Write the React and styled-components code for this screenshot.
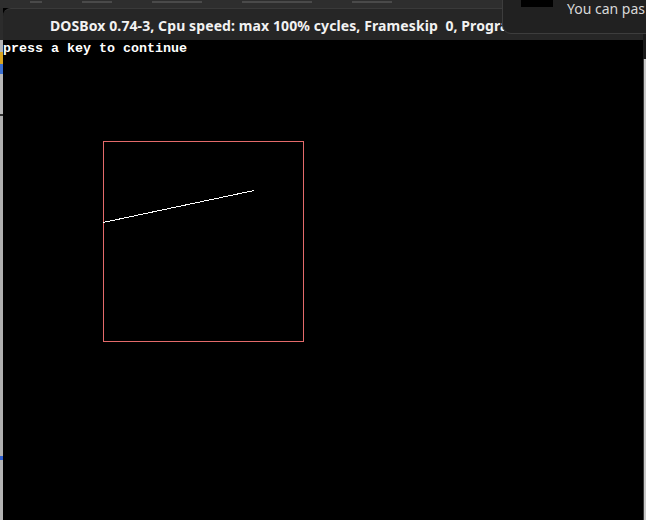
import React from 'react';
import styled, {createGlobalStyle} from 'styled-components';

const GlobalStyle = createGlobalStyle`
    html, body {
        margin: 0;
        padding: 0;
        background: #2c2c2c;
        overflow: hidden;
    }
`;

const Desktop = styled.div`
    position: relative;
    width: 646px;
    height: 520px;
    display: flex;
    flex-direction: column;
    background: #2c2c2c;
    overflow: hidden;
`;

const BackStrip = styled.div`
    height: 8px;
    display: flex;
    gap: 40px;
    padding-left: 30px;
    background: #2e2e2e;
`;

const BackMark = styled.span`
    width: ${props => props.w}px;
    height: 2px;
    margin-top: 1px;
    background: #4a4a4a;
`;

const Body = styled.div`
    flex: 1;
    display: flex;
`;

const LeftEdge = styled.div`
    width: 3px;
    flex-shrink: 0;
    display: flex;
    flex-direction: column;
    background: linear-gradient(180deg, #2c2c2c 0, #2c2c2c 32px, #b6b6b6 32px);
    padding-top: 32px;
`;

const EdgePiece = styled.div`
    height: ${props => props.h}px;
    background: ${props => props.color};
`;

const Window = styled.div`
    flex: 1;
    display: flex;
    flex-direction: column;
    background: #000;
`;

const TitleBar = styled.div`
    height: 32px;
    display: flex;
    align-items: center;
    padding-left: 47px;
    background: #262626;
    border-top-left-radius: 8px;
    border-top: 1px solid #3a3a3a;
    box-sizing: border-box;
    overflow: hidden;
    white-space: nowrap;
`;

const Title = styled.span`
    font-family: "Noto Sans", "Open Sans", sans-serif;
    font-weight: bold;
    font-size: 14px;
    letter-spacing: 0.1px;
    color: #f2f2f2;
    padding-top: 1px;
`;

const Screen = styled.div`
    flex: 1;
    display: grid;
    background: #000;
    & > * {
        grid-area: 1 / 1;
    }
`;

const Prompt = styled.div`
    font-family: "Liberation Mono", "DejaVu Sans Mono", monospace;
    font-weight: bold;
    font-size: 13.33px;
    line-height: 16px;
    height: 16px;
    color: #fff;
    padding-top: 1px;
`;

const Canvas = styled.svg`
    display: block;
`;

const RightEdge = styled.div`
    width: 3px;
    flex-shrink: 0;
    display: flex;
    flex-direction: column;
`;

const RightTop = styled.div`
    height: 51px;
    background: #1a1a1a;
`;

const RightRest = styled.div`
    flex: 1;
    background: linear-gradient(90deg, #3a3a3a 0, #3a3a3a 1px, #c8c8c8 1px);
`;

const Notice = styled.div`
    position: absolute;
    top: -1px;
    left: 502px;
    width: 160px;
    height: 35px;
    background: #212121;
    border: 1px solid #3d3d3d;
    border-bottom-left-radius: 9px;
    box-sizing: border-box;
    display: flex;
    align-items: flex-start;
    gap: 14px;
    padding-left: 18px;
`;

const NoticeThumb = styled.div`
    width: 32px;
    height: 7px;
    background: #000;
`;

const NoticeText = styled.span`
    font-family: "Noto Sans", "Open Sans", sans-serif;
    font-size: 14px;
    color: #d8d8d8;
    line-height: 18px;
    white-space: nowrap;
`;

const edgePieces = [
    {h: 12, color: '#b4b4b4'},
    {h: 12, color: '#d9a520'},
    {h: 10, color: '#3b6fd0'},
    {h: 40, color: '#b8b8b8'},
    {h: 2, color: '#303030'},
    {h: 340, color: '#b0b0b0'},
    {h: 4, color: '#2f5fd0'},
    {h: 60, color: '#b4b4b4'}
];

export default function App() {
    return (
        <Desktop>
            <GlobalStyle/>
            <BackStrip>
                <BackMark w={12}/>
                <BackMark w={30}/>
                <BackMark w={50}/>
                <BackMark w={70}/>
                <BackMark w={40}/>
            </BackStrip>
            <Body>
                <LeftEdge>
                    {edgePieces.map((p, i) => <EdgePiece key={i} h={p.h} color={p.color}/>)}
                </LeftEdge>
                <Window>
                    <TitleBar>
                        <Title>DOSBox 0.74-3, Cpu speed: max 100% cycles, Frameskip&nbsp; 0, Program: GRAPHICS</Title>
                    </TitleBar>
                    <Screen>
                        <Prompt>press a key to continue</Prompt>
                        <Canvas width="640" height="480" viewBox="0 0 640 480">
                            <rect x="100.5" y="101.5" width="200" height="200" fill="none" stroke="#e46a6a" strokeWidth="1"/>
                            <line x1="100" y1="182.5" x2="251" y2="150.5" stroke="#fff" strokeWidth="1" shapeRendering="crispEdges"/>
                        </Canvas>
                    </Screen>
                </Window>
                <RightEdge>
                    <RightTop/>
                    <RightRest/>
                </RightEdge>
            </Body>
            <Notice>
                <NoticeThumb/>
                <NoticeText>You can pas</NoticeText>
            </Notice>
        </Desktop>
    );
}
